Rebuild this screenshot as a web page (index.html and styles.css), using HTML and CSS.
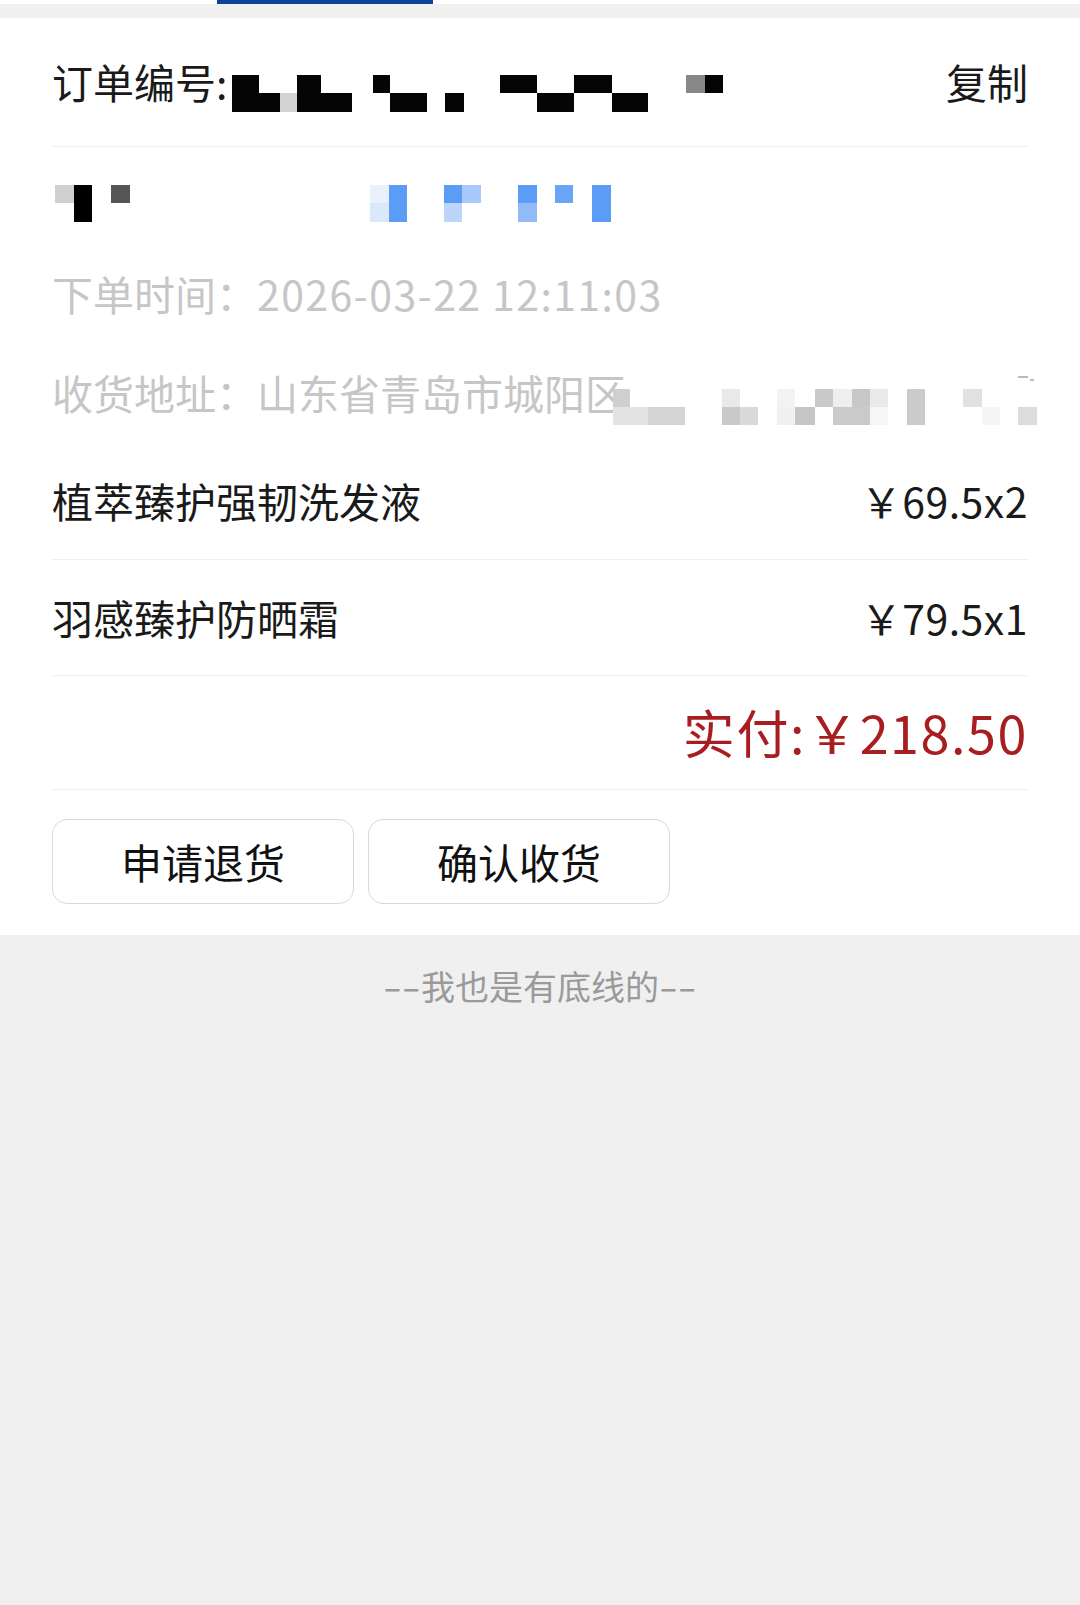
FILE: index.html
```html
<!DOCTYPE html>
<html lang="zh-CN">
<head>
<meta charset="utf-8">
<title>订单详情</title>
<link rel="stylesheet" href="styles.css">
</head>
<body>
<div class="tabbar"><div class="tab-indicator"></div></div>

<main class="card">
  <div class="row order">
    <div class="order-left">
      <span class="label">订单编号:</span>
      <svg class="mask mask-order" width="495" height="38" viewBox="0 0 495 38">
        <rect x="1" y="1" width="27" height="37" fill="#050505"/>
        <rect x="1" y="19" width="48" height="19" fill="#050505"/>
        <rect x="49" y="19" width="17" height="19" fill="#d3d3d3"/>
        <rect x="66" y="1" width="24" height="18" fill="#050505"/>
        <rect x="66" y="19" width="55" height="19" fill="#050505"/>
        <rect x="142" y="1" width="17" height="18" fill="#050505"/>
        <rect x="159" y="19" width="37" height="19" fill="#050505"/>
        <rect x="214" y="19" width="19" height="19" fill="#050505"/>
        <rect x="269" y="1" width="37" height="18" fill="#050505"/>
        <rect x="306" y="19" width="37" height="19" fill="#050505"/>
        <rect x="343" y="1" width="38" height="18" fill="#050505"/>
        <rect x="381" y="19" width="36" height="19" fill="#050505"/>
        <rect x="455" y="1" width="19" height="18" fill="#888888"/>
        <rect x="474" y="1" width="18" height="18" fill="#050505"/>
      </svg>
    </div>
    <span class="copy">复制</span>
  </div>

  <div class="row mask-row">
    <svg class="mask mask-line" width="560" height="37" viewBox="0 0 560 37">
      <rect x="0" y="0" width="19" height="18" fill="#d0d0d0"/>
      <rect x="19" y="0" width="18" height="37" fill="#000000"/>
      <rect x="56" y="0" width="19" height="18" fill="#555555"/>
      <rect x="315" y="0" width="19" height="18" fill="#eaf1fd"/>
      <rect x="315" y="18" width="19" height="19" fill="#dbe7fb"/>
      <rect x="334" y="0" width="18" height="37" fill="#5b9cf7"/>
      <rect x="389" y="0" width="18" height="18" fill="#5b9cf7"/>
      <rect x="389" y="18" width="18" height="19" fill="#bcd6fb"/>
      <rect x="407" y="0" width="19" height="18" fill="#a8cafb"/>
      <rect x="463" y="0" width="19" height="18" fill="#5b9cf7"/>
      <rect x="463" y="18" width="19" height="19" fill="#90bbf7"/>
      <rect x="500" y="0" width="18" height="18" fill="#6aa5f7"/>
      <rect x="537" y="0" width="19" height="37" fill="#5b9cf7"/>
    </svg>
  </div>

  <div class="row info time">下单时间：<span class="num">2026-03-22 12:11:03</span></div>

  <div class="row info addr">
    <span class="addr-text">收货地址：山东省青岛市城阳区</span>
    <svg class="mask mask-addr" width="424" height="49" viewBox="0 0 424 49">
      <rect x="0" y="13" width="17" height="18" fill="#cfcfcf"/>
      <rect x="0" y="31" width="35" height="18" fill="#e3e3e3"/>
      <rect x="35" y="31" width="37" height="18" fill="#d4d4d4"/>
      <rect x="109" y="13" width="18" height="18" fill="#e9e9e9"/>
      <rect x="109" y="31" width="18" height="18" fill="#c9c9c9"/>
      <rect x="127" y="31" width="18" height="18" fill="#dadada"/>
      <rect x="164" y="13" width="18" height="18" fill="#f3f3f3"/>
      <rect x="164" y="31" width="18" height="18" fill="#f0f0f0"/>
      <rect x="182" y="31" width="20" height="18" fill="#c6c6c6"/>
      <rect x="202" y="13" width="18" height="18" fill="#c9c9c9"/>
      <rect x="220" y="13" width="19" height="18" fill="#efefef"/>
      <rect x="220" y="31" width="37" height="18" fill="#cacaca"/>
      <rect x="239" y="13" width="18" height="18" fill="#c8c8c8"/>
      <rect x="257" y="13" width="18" height="18" fill="#e9e9e9"/>
      <rect x="257" y="31" width="18" height="18" fill="#f6f6f6"/>
      <rect x="294" y="13" width="18" height="36" fill="#cbcbcb"/>
      <rect x="350" y="13" width="19" height="18" fill="#e1e1e1"/>
      <rect x="369" y="31" width="18" height="18" fill="#f5f5f5"/>
      <rect x="405" y="31" width="19" height="18" fill="#dcdcdc"/>
      <rect x="405" y="0" width="10" height="2" fill="#bbbbbb"/>
      <rect x="417" y="3" width="4" height="2" fill="#bbbbbb"/>
    </svg>
  </div>

  <div class="row item item1">
    <span class="name">植萃臻护强韧洗发液</span>
    <span class="price">￥69.5x2</span>
  </div>
  <div class="row item item2">
    <span class="name">羽感臻护防晒霜</span>
    <span class="price">￥79.5x1</span>
  </div>

  <div class="row total">实付:￥218.50</div>

  <div class="actions">
    <button class="btn" type="button">申请退货</button>
    <button class="btn" type="button">确认收货</button>
  </div>
</main>

<footer class="bottom-line"><span class="dash">--</span>我也是有底线的<span class="dash">--</span></footer>
</body>
</html>
```

FILE: styles.css
```css
* {
  box-sizing: border-box;
}

html, body {
  margin: 0;
  padding: 0;
}

body {
  background: #f0f0f0;
  font-family: "Noto Sans CJK SC", "Noto Sans", sans-serif;
  color: #1a1a1a;
  width: 1080px;
  min-height: 1605px;
}

.tabbar {
  height: 4px;
  background: #ffffff;
  display: flex;
}

.tab-indicator {
  margin-left: 217px;
  width: 216px;
  height: 4px;
  background: #0b4399;
}

.card {
  margin-top: 14px;
  background: #ffffff;
  padding: 0 52px;
}

.row {
  display: flex;
  align-items: center;
  font-size: 41px;
  line-height: 1.2;
  white-space: nowrap;
}

.order {
  height: 129px;
  justify-content: space-between;
  border-bottom: 1px solid #f0f0f0;
}

.order-left {
  display: flex;
  align-items: center;
}

.label {
  color: #1a1a1a;
}

.mask {
  display: block;
  flex: none;
}

.mask-order {
  margin-left: 4px;
  margin-top: 21px;
}

.copy {
  color: #1a1a1a;
}

.mask-row {
  height: 112px;
}

.mask-line {
  margin-left: 3px;
}

.info {
  color: #c6c6c6;
}

.time {
  height: 70px;
}

.num {
  letter-spacing: 1.4px;
}

.addr {
  height: 113px;
  padding-top: 15px;
}

.addr-text {
  flex: none;
}

.mask-addr {
  margin-left: -13px;
  margin-top: 15px;
}

.item {
  justify-content: space-between;
  border-bottom: 1px solid #f0f0f0;
  color: #1a1a1a;
}

.price {
  letter-spacing: 0.5px;
}

.item1 {
  height: 118px;
}

.item2 {
  height: 116px;
}

.total {
  height: 114px;
  justify-content: flex-end;
  border-bottom: 1px solid #f0f0f0;
  color: #a81d20;
  font-size: 52px;
  letter-spacing: 1.6px;
}

.actions {
  display: flex;
  gap: 14px;
  padding: 29px 0 31px;
}

.btn {
  width: 302px;
  height: 85px;
  border: 1.5px solid #d9d9d9;
  border-radius: 15px;
  background: #ffffff;
  font-family: "Noto Sans CJK SC", "Noto Sans", sans-serif;
  font-size: 41px;
  color: #111111;
  padding: 0;
  line-height: 1;
}

.bottom-line {
  padding-top: 26px;
  text-align: center;
  font-size: 34px;
  line-height: 50px;
  color: #9a9a9a;
}

.dash {
  display: inline-block;
  transform: scaleX(1.6);
  margin: 0 7px;
}
```
